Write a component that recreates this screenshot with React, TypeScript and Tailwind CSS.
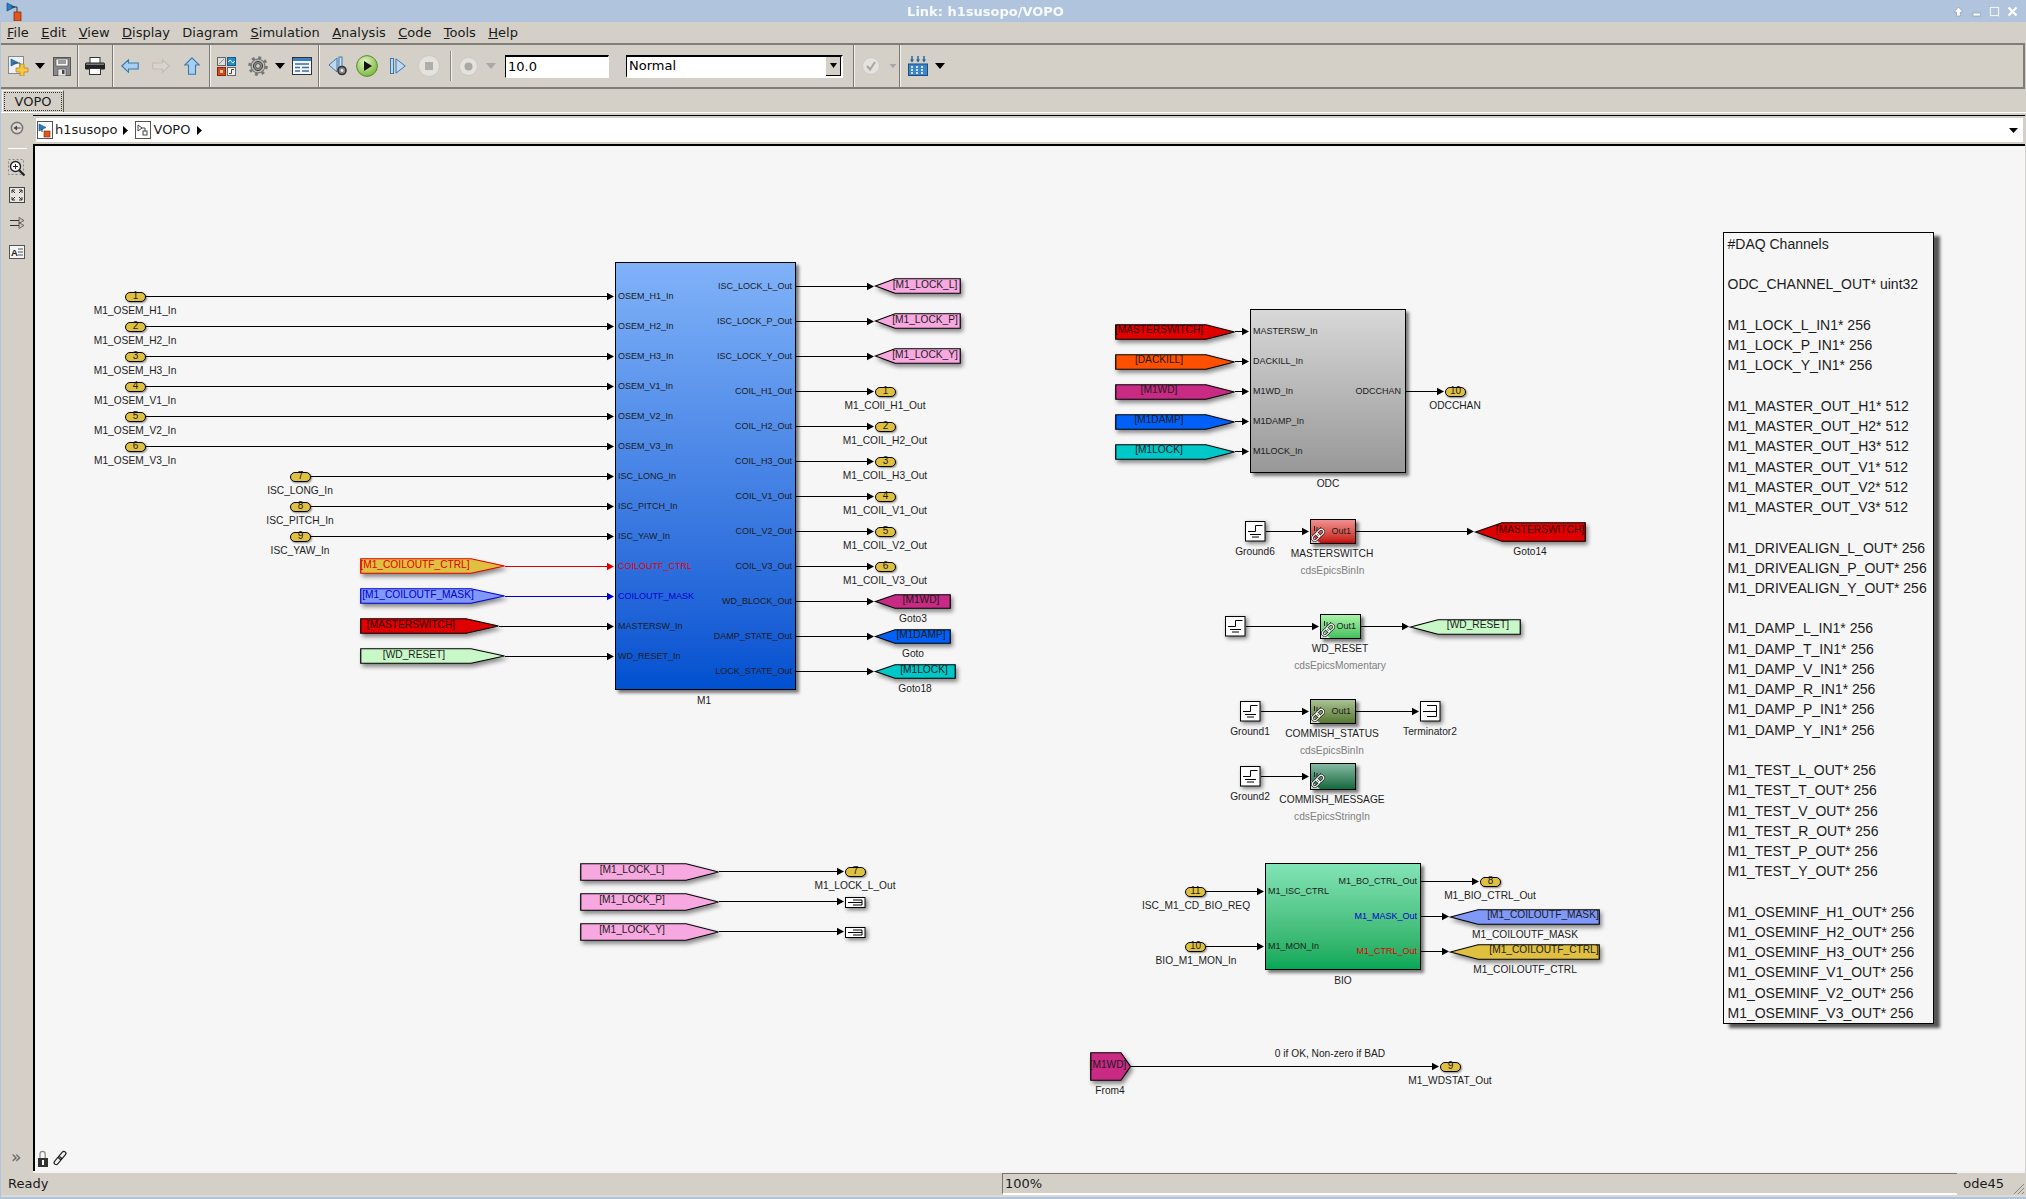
import React from "react";

const OX = 34;
const OY = 146;
const P = (x: number, y: number) => ({ left: x - OX, top: y - OY });

type Anchor = "c" | "l" | "r";
const anchorClass: Record<Anchor, string> = {
  c: "-translate-x-1/2 -translate-y-1/2",
  l: "-translate-y-1/2",
  r: "-translate-x-full -translate-y-1/2",
};

function T({ x, y, t, a = "c", c = "text-[#1c1c1c]", s = "text-[10.2px]" }: { x: number; y: number; t: string; a?: Anchor; c?: string; s?: string }) {
  return (
    <span className={`absolute whitespace-nowrap leading-none ${s} ${anchorClass[a]} ${c}`} style={P(x, y)}>
      {t}
    </span>
  );
}
const PORT = "text-[9px]";

function Pill({ x, y, n, w = 21 }: { x: number; y: number; n: string; w?: number }) {
  return (
    <div
      className="absolute h-[10px] rounded-full border border-black bg-[#e0c040] shadow-[1px_1px_2px_rgba(0,0,0,0.45)] flex items-center justify-center text-[10px] leading-none text-[#1c1c1c]"
      style={{ ...P(x, y - 5), width: w }}
    >
      <span className="-mt-[1px]">{n}</span>
    </div>
  );
}

// Tag: a goto / from pentagon. dir r = point on the right.
function Tag({ x, x2, y, h = 16, notch, dir = "r", fill, stroke = "#000" }: { x: number; x2: number; y: number; h?: number; notch: number; dir?: "r" | "l"; fill: string; stroke?: string }) {
  const w = x2 - x;
  const d =
    dir === "r"
      ? `M.75 .75 H${w - notch} L${w - 0.5} ${h / 2} L${w - notch} ${h - 0.75} H.75 Z`
      : `M.5 ${h / 2} L${notch} .75 H${w - 0.75} V${h - 0.75} H${notch} Z`;
  return (
    <svg className="absolute overflow-visible drop-shadow-[2px_3px_2px_rgba(0,0,0,0.45)]" style={P(x, y - h / 2)} width={w} height={h}>
      <path d={d} fill={fill} stroke={stroke} strokeWidth="1.2" />
    </svg>
  );
}

function Ground({ x, y }: { x: number; y: number }) {
  return (
    <svg className="absolute overflow-visible drop-shadow-[2px_2px_2px_rgba(0,0,0,0.5)]" style={P(x, y)} width="20" height="20">
      <rect x=".5" y=".5" width="19.5" height="19.5" fill="#fff" stroke="#000" />
      <path d="M3 10.5H10.5V4.5H17.5M5 13.5H16M7 16H14" fill="none" stroke="#000" />
    </svg>
  );
}

function Term({ x, y, small }: { x: number; y: number; small?: boolean }) {
  return small ? (
    <svg className="absolute overflow-visible drop-shadow-[2px_2px_2px_rgba(0,0,0,0.5)]" style={P(x, y)} width="20" height="10">
      <rect x=".5" y=".5" width="19.5" height="10" fill="#fff" stroke="#000" />
      <path d="M8 3H17V8H8M3 5.5H17" fill="none" stroke="#000" />
    </svg>
  ) : (
    <svg className="absolute overflow-visible drop-shadow-[2px_2px_2px_rgba(0,0,0,0.5)]" style={P(x, y)} width="20" height="20">
      <rect x=".5" y=".5" width="19.5" height="19.5" fill="#fff" stroke="#000" />
      <path d="M7 4.5H16.5V15.5H7M3 10.5H16.5" fill="none" stroke="#000" />
    </svg>
  );
}

function Chain({ x, y }: { x: number; y: number }) {
  return (
    <svg className="absolute overflow-visible" style={P(x, y)} width="18" height="20">
      <path d="M0 20V12L9 20Z" fill="#fff" opacity=".75" />
      <path d="M3.5 3V8M6 4V8M8 7L10 4" fill="none" stroke="#222" strokeWidth="1" />
      <g fill="none" transform="rotate(45 7 12)">
        <rect x="4.5" y="5" width="5" height="8" rx="2.5" stroke="#222" strokeWidth="2.4" />
        <rect x="4.5" y="11" width="5" height="8" rx="2.5" stroke="#222" strokeWidth="2.4" />
        <rect x="4.5" y="5" width="5" height="8" rx="2.5" stroke="#fff" strokeWidth="1.1" />
        <rect x="4.5" y="11" width="5" height="8" rx="2.5" stroke="#fff" strokeWidth="1.1" />
      </g>
    </svg>
  );
}

function Block({ x, x2, y, y2, cls }: { x: number; x2: number; y: number; y2: number; cls: string }) {
  return (
    <div
      className={`absolute border-[1.5px] border-black shadow-[3px_3px_3px_rgba(0,0,0,0.5)] ${cls}`}
      style={{ ...P(x, y), width: x2 - x, height: y2 - y }}
    />
  );
}

type L = [number, number, number, string?];
const lines: L[] = [
  ...[0, 1, 2, 3, 4, 5].map((i): L => [146, 608, 296.5 + 30 * i]),
  ...[6, 7, 8].map((i): L => [311, 608, 296.5 + 30 * i]),
  [505, 608, 566.5, "#e00000"],
  [505, 608, 596.5, "#0000d0"],
  [499, 608, 626.5],
  [505, 608, 656.5],
  ...Array.from({ length: 12 }, (_, i): L => [796, 868, 286.5 + 35 * i]),
  ...[0, 1, 2, 3, 4].map((i): L => [1235, 1243, 331.5 + 30 * i]),
  [1406, 1438, 391.5],
  [1266, 1303, 531.5],
  [1356, 1468, 531.5],
  [1246, 1313, 626.5],
  [1361, 1403, 626.5],
  [1261, 1303, 711.5],
  [1356, 1413, 711.5],
  [1261, 1303, 776.5],
  [1206, 1258, 891.5],
  [1206, 1258, 946.5],
  [1421, 1473, 881.5],
  [1421, 1443, 916.5],
  [1421, 1443, 951.5],
  [1131, 1433, 1066.5],
  [719, 838, 871.5],
  [719, 838, 901.5],
  [719, 838, 931.5],
];

const noteLines = [
  "#DAQ Channels",
  "",
  "ODC_CHANNEL_OUT* uint32",
  "",
  "M1_LOCK_L_IN1* 256",
  "M1_LOCK_P_IN1* 256",
  "M1_LOCK_Y_IN1* 256",
  "",
  "M1_MASTER_OUT_H1* 512",
  "M1_MASTER_OUT_H2* 512",
  "M1_MASTER_OUT_H3* 512",
  "M1_MASTER_OUT_V1* 512",
  "M1_MASTER_OUT_V2* 512",
  "M1_MASTER_OUT_V3* 512",
  "",
  "M1_DRIVEALIGN_L_OUT* 256",
  "M1_DRIVEALIGN_P_OUT* 256",
  "M1_DRIVEALIGN_Y_OUT* 256",
  "",
  "M1_DAMP_L_IN1* 256",
  "M1_DAMP_T_IN1* 256",
  "M1_DAMP_V_IN1* 256",
  "M1_DAMP_R_IN1* 256",
  "M1_DAMP_P_IN1* 256",
  "M1_DAMP_Y_IN1* 256",
  "",
  "M1_TEST_L_OUT* 256",
  "M1_TEST_T_OUT* 256",
  "M1_TEST_V_OUT* 256",
  "M1_TEST_R_OUT* 256",
  "M1_TEST_P_OUT* 256",
  "M1_TEST_Y_OUT* 256",
  "",
  "M1_OSEMINF_H1_OUT* 256",
  "M1_OSEMINF_H2_OUT* 256",
  "M1_OSEMINF_H3_OUT* 256",
  "M1_OSEMINF_V1_OUT* 256",
  "M1_OSEMINF_V2_OUT* 256",
  "M1_OSEMINF_V3_OUT* 256",
];

const leftIn = ["OSEM_H1_In", "OSEM_H2_In", "OSEM_H3_In", "OSEM_V1_In", "OSEM_V2_In", "OSEM_V3_In", "ISC_LONG_In", "ISC_PITCH_In", "ISC_YAW_In", "COILOUTF_CTRL", "COILOUTF_MASK", "MASTERSW_In", "WD_RESET_In"];
const m1Out = ["ISC_LOCK_L_Out", "ISC_LOCK_P_Out", "ISC_LOCK_Y_Out", "COIL_H1_Out", "COIL_H2_Out", "COIL_H3_Out", "COIL_V1_Out", "COIL_V2_Out", "COIL_V3_Out", "WD_BLOCK_Out", "DAMP_STATE_Out", "LOCK_STATE_Out"];
const inNames = ["M1_OSEM_H1_In", "M1_OSEM_H2_In", "M1_OSEM_H3_In", "M1_OSEM_V1_In", "M1_OSEM_V2_In", "M1_OSEM_V3_In"];

function Diagram() {
  return (
    <div className="relative flex-1 bg-[#f6f6f6] border-t-2 border-l-2 border-black overflow-hidden font-['Liberation_Sans',sans-serif]">
      <div className="absolute inset-0 -ml-[1px]">
        {/* tags on left of M1 */}
        <Tag x={360} x2={505} y={566.3} notch={34} fill="#e0c040" stroke="#e00000" />
        <Tag x={360} x2={505} y={596.3} notch={34} fill="#8098f8" stroke="#0000d0" />
        <Tag x={360} x2={499} y={626.3} notch={33} fill="#e00000" />
        <Tag x={360} x2={505} y={656.3} notch={34} fill="#c8f8c8" />
        <Block x={615} x2={796} y={262} y2={690} cls="bg-gradient-to-b from-[#80b2f8] to-[#0050d0]" />
        <Block x={1250} x2={1406} y={309} y2={473} cls="bg-gradient-to-b from-[#d8d8d8] to-[#989898]" />
        <Block x={1265} x2={1421} y={863} y2={970} cls="bg-gradient-to-b from-[#82e4b6] to-[#00a858]" />
        <Block x={1310} x2={1356} y={519} y2={544} cls="bg-gradient-to-b from-[#f09090] to-[#c00000]" />
        <Block x={1320} x2={1361} y={614} y2={639} cls="bg-gradient-to-b from-[#a8f4a8] to-[#40c060]" />
        <Block x={1310} x2={1356} y={699} y2={724} cls="bg-gradient-to-b from-[#aac294] to-[#587830]" />
        <Block x={1310} x2={1356} y={763} y2={790} cls="bg-gradient-to-b from-[#84baa4] to-[#0a6a40]" />

        {/* signals */}
        <svg className="absolute inset-0 w-full h-full">
          {lines.map(([a, b, y, c], i) => {
            const col = c ?? "#000";
            return (
              <g key={i} transform={`translate(${-OX} ${-OY})`}>
                <path d={`M${a} ${y}H${b}`} stroke={col} strokeWidth="1" fill="none" />
                <path d={`M${b - 1} ${y - 3.7}L${b + 6} ${y}L${b - 1} ${y + 3.7}Z`} fill={col} />
              </g>
            );
          })}
        </svg>

        {/* inports */}
        {inNames.map((t, i) => (
          <React.Fragment key={t}>
            <Pill x={125} y={296.5 + 30 * i} n={String(i + 1)} />
            <T x={135} y={310.5 + 30 * i} t={t} />
          </React.Fragment>
        ))}
        {["ISC_LONG_In", "ISC_PITCH_In", "ISC_YAW_In"].map((t, i) => (
          <React.Fragment key={t}>
            <Pill x={290} y={476.5 + 30 * i} n={String(i + 7)} />
            <T x={300} y={490.5 + 30 * i} t={t} />
          </React.Fragment>
        ))}
        <T x={415} y={565} t="[M1_COILOUTF_CTRL]" c="text-[#e00000]" />
        <T x={418} y={595} t="[M1_COILOUTF_MASK]" c="text-[#0000d0]" />
        <T x={411} y={625} t="[MASTERSWITCH]" c="text-[#300000]" />
        <T x={414} y={655} t="[WD_RESET]" />

        {/* M1 ports */}
        {leftIn.map((t, i) => (
          <T key={t} x={618} y={296 + 30 * i} t={t} a="l" s={PORT} c={i === 9 ? "text-[#e00000]" : i === 10 ? "text-[#0000d0]" : "text-[#1c1c1c]"} />
        ))}
        {m1Out.map((t, i) => (
          <T key={t} x={792} y={286 + 35 * i} t={t} a="r" s={PORT} />
        ))}
        <T x={704} y={701} t="M1" />

        {/* M1 outputs */}
        {["[M1_LOCK_L]", "[M1_LOCK_P]", "[M1_LOCK_Y]"].map((t, i) => (
          <React.Fragment key={t}>
            <Tag x={875} x2={961} y={286.3 + 35 * i} notch={20} dir="l" fill="#f8a8e0" />
            <T x={925} y={285 + 35 * i} t={t} />
          </React.Fragment>
        ))}
        {["M1_COIl_H1_Out", "M1_COIL_H2_Out", "M1_COIL_H3_Out", "M1_COIL_V1_Out", "M1_COIL_V2_Out", "M1_COIL_V3_Out"].map((t, i) => (
          <React.Fragment key={t}>
            <Pill x={875} y={391.5 + 35 * i} n={String(i + 1)} />
            <T x={885} y={405.5 + 35 * i} t={t} />
          </React.Fragment>
        ))}
        <Tag x={875} x2={951} y={601.5} h={15} notch={20} dir="l" fill="#c82a84" />
        <T x={921} y={600} t="[M1WD]" />
        <T x={913} y={618.5} t="Goto3" />
        <Tag x={875} x2={951} y={636.5} h={15} notch={20} dir="l" fill="#0060f8" />
        <T x={921} y={635} t="[M1DAMP]" />
        <T x={913} y={653.5} t="Goto" />
        <Tag x={875} x2={956} y={671.5} h={15} notch={20} dir="l" fill="#00c8c8" />
        <T x={924} y={670} t="[M1LOCK]" />
        <T x={915} y={688.5} t="Goto18" />

        {/* ODC */}
        {[
          ["[MASTERSWITCH]", "#e00000"],
          ["[DACKILL]", "#ff5000"],
          ["[M1WD]", "#c82a84"],
          ["[M1DAMP]", "#0060f8"],
          ["[M1LOCK]", "#00c8c8"],
        ].map(([t, f], i) => (
          <React.Fragment key={t}>
            <Tag x={1115} x2={1235} y={331.5 + 30 * i} notch={29} fill={f} />
            <T x={1159} y={330 + 30 * i} t={t} c={i === 0 ? "text-[#300000]" : "text-[#1c1c1c]"} />
          </React.Fragment>
        ))}
        {["MASTERSW_In", "DACKILL_In", "M1WD_In", "M1DAMP_In", "M1LOCK_In"].map((t, i) => (
          <T key={t} x={1253} y={331 + 30 * i} t={t} a="l" s={PORT} />
        ))}
        <T x={1401} y={391} t="ODCCHAN" a="r" s={PORT} />
        <T x={1328} y={483.5} t="ODC" />
        <Pill x={1445} y={391.5} n="10" />
        <T x={1455} y={405.5} t="ODCCHAN" />

        {/* MASTERSWITCH */}
        <Ground x={1245} y={521} />
        <T x={1255} y={552} t="Ground6" />
        <Chain x={1311} y={523} />
        <T x={1351} y={531} t="Out1" a="r" s={PORT} />
        <T x={1332} y={553.5} t="MASTERSWITCH" />
        <T x={1332.5} y={571} t="cdsEpicsBinIn" c="text-[#808080]" />
        <Tag x={1475} x2={1586} y={531.5} h={20} notch={27} dir="l" fill="#e00000" />
        <T x={1540} y={530} t="[MASTERSWITCH]" c="text-[#300000]" />
        <T x={1530} y={552} t="Goto14" />

        {/* WD_RESET */}
        <Ground x={1225} y={616} />
        <Chain x={1321} y={618} />
        <T x={1356} y={626} t="Out1" a="r" s={PORT} />
        <T x={1340} y={648.5} t="WD_RESET" />
        <T x={1340} y={666} t="cdsEpicsMomentary" c="text-[#808080]" />
        <Tag x={1410} x2={1521} y={626.5} notch={28} dir="l" fill="#c8f8c8" />
        <T x={1478} y={625} t="[WD_RESET]" />

        {/* COMMISH */}
        <Ground x={1240} y={701} />
        <T x={1250} y={732} t="Ground1" />
        <Chain x={1311} y={703} />
        <T x={1351} y={711} t="Out1" a="r" s={PORT} />
        <T x={1332} y={734} t="COMMISH_STATUS" />
        <T x={1332} y={751} t="cdsEpicsBinIn" c="text-[#808080]" />
        <Term x={1420} y={701} />
        <T x={1430} y={732} t="Terminator2" />
        <Ground x={1240} y={766} />
        <T x={1250} y={797} t="Ground2" />
        <Chain x={1311} y={769} />
        <T x={1332} y={799.5} t="COMMISH_MESSAGE" />
        <T x={1332} y={817} t="cdsEpicsStringIn" c="text-[#808080]" />

        {/* lower-left tags */}
        {["[M1_LOCK_L]", "[M1_LOCK_P]", "[M1_LOCK_Y]"].map((t, i) => (
          <React.Fragment key={t}>
            <Tag x={580} x2={719} y={871.5 + 30 * i} h={18} notch={33} fill="#f8a8e0" />
            <T x={632} y={870 + 30 * i} t={t} />
          </React.Fragment>
        ))}
        <Pill x={845} y={871.5} n="7" />
        <T x={855} y={886} t="M1_LOCK_L_Out" />
        <Term x={845} y={896.5} small />
        <Term x={845} y={926.5} small />

        {/* BIO */}
        <Pill x={1185} y={891.5} n="11" />
        <T x={1196} y={906} t="ISC_M1_CD_BIO_REQ" />
        <Pill x={1185} y={946.5} n="10" />
        <T x={1196} y={961} t="BIO_M1_MON_In" />
        <T x={1268} y={891} t="M1_ISC_CTRL" a="l" s={PORT} />
        <T x={1268} y={946} t="M1_MON_In" a="l" s={PORT} />
        <T x={1417} y={881} t="M1_BO_CTRL_Out" a="r" s={PORT} />
        <T x={1417} y={916} t="M1_MASK_Out" a="r" s={PORT} c="text-[#0000d0]" />
        <T x={1417} y={951} t="M1_CTRL_Out" a="r" s={PORT} c="text-[#e00000]" />
        <T x={1343} y={980.5} t="BIO" />
        <Pill x={1480} y={881.5} n="8" />
        <T x={1490} y={896} t="M1_BIO_CTRL_Out" />
        <Tag x={1450} x2={1600} y={916.5} notch={28} dir="l" fill="#8098f8" />
        <T x={1543} y={915} t="[M1_COILOUTF_MASK]" />
        <T x={1525} y={934.5} t="M1_COILOUTF_MASK" />
        <Tag x={1450} x2={1600} y={951.5} notch={28} dir="l" fill="#e0c040" />
        <T x={1544} y={950} t="[M1_COILOUTF_CTRL]" />
        <T x={1525} y={969.5} t="M1_COILOUTF_CTRL" />

        {/* From4 */}
        <Tag x={1090} x2={1131} y={1066.5} h={29} notch={10} fill="#c82a84" />
        <T x={1108} y={1065} t="[M1WD]" />
        <T x={1110} y={1091} t="From4" />
        <T x={1330} y={1054} t="0 if OK, Non-zero if BAD" />
        <Pill x={1440} y={1066.5} n="9" />
        <T x={1450} y={1081} t="M1_WDSTAT_Out" />

        {/* Note */}
        <div
          className="absolute w-[211px] h-[792px] bg-[#f6f6f6] border border-black shadow-[6px_4px_3px_rgba(0,0,0,0.65)] pl-[3.5px] pt-[1px] text-[14px] leading-[20.24px] text-[#1c1c1c] whitespace-pre"
          style={P(1723, 232)}
        >
          {noteLines.map((t, i) => (
            <div key={i} className="h-[20.24px]">
              {t || " "}
            </div>
          ))}
        </div>

        {/* lock / link */}
        <svg className="absolute" style={P(37, 1150)} width="32" height="17" viewBox="0 0 32 17">
          <path d="M3 8V4a2.6 2.6 0 015.2 0V8" fill="none" stroke="#888" strokeWidth="1.2" />
          <rect x="1" y="8" width="10" height="9" fill="#333" />
          <rect x="5" y="10" width="2" height="5" fill="#fff" />
          <g transform="rotate(40 23 8)" fill="none" stroke="#222" strokeWidth="1.2">
            <rect x="21" y="0" width="4" height="9" rx="2" />
            <rect x="21" y="7" width="4" height="9" rx="2" />
          </g>
        </svg>
      </div>
    </div>
  );
}

function Caret({ gray }: { gray?: boolean }) {
  return (
    <svg width="10" height="6" viewBox="0 0 10 6" className="shrink-0">
      <path d="M0 0H10L5 6Z" fill={gray ? "#a8a8a8" : "#000"} />
    </svg>
  );
}

function ModelIcon({ size = 16 }: { size?: number }) {
  return (
    <svg width={size} height={size + 2} viewBox="0 0 16 18" className="shrink-0">
      <rect x=".5" y=".5" width="15" height="17" fill="#fff" stroke="#555" />
      <path d="M2 3L9 6.5L2 10Z" fill="#2480c8" stroke="#134e80" strokeWidth=".6" />
      <path d="M5 8V11" stroke="#333" />
      <rect x="7" y="10" width="6" height="6" fill="#e0561c" stroke="#802000" strokeWidth=".6" />
    </svg>
  );
}

function SubIcon() {
  return (
    <svg width="16" height="18" viewBox="0 0 16 18" className="shrink-0">
      <rect x=".5" y=".5" width="15" height="17" fill="#fff" stroke="#555" />
      <path d="M3 4L7 7L3 10Z" fill="none" stroke="#444" />
      <rect x="8" y="10" width="4" height="4" fill="none" stroke="#444" />
      <path d="M7 7H10V10" stroke="#444" fill="none" />
    </svg>
  );
}

function Sep() {
  return <div className="w-[2px] self-stretch bg-[#7a7872] border-r border-[#f4f2ee] shrink-0" />;
}

function Toolbar() {
  return (
    <div className="h-[46px] flex items-center border-t-2 border-b-2 border-[#7f7d78] border-r-2 mr-[1px] shrink-0">
      <div className="w-[76px] flex items-center pl-[7px] shrink-0">
        <svg width="21" height="20" viewBox="0 0 21 20" className="shrink-0">
          <rect x=".5" y=".5" width="15" height="17" fill="#eef2f6" stroke="#888" />
          <path d="M3 3L10 6.5L3 10Z" fill="#2c80c8" stroke="#134e80" strokeWidth=".6" />
          <path d="M5 7H12V11" stroke="#444" fill="none" />
          <path d="M12 8H16V12H20V16H16V20H12V16H8V12H12Z" fill="#f8c848" stroke="#b08820" strokeWidth=".8" />
        </svg>
        <div className="ml-[6px]">
          <Caret />
        </div>
        <svg width="18" height="19" viewBox="0 0 18 19" className="ml-[8px] shrink-0">
          <rect x=".5" y=".5" width="17" height="18" fill="#8a8a8a" stroke="#555" />
          <rect x="3" y="2" width="12" height="7" fill="#f4f4f4" stroke="#444" strokeWidth=".6" />
          <path d="M5 4H13M5 6H13" stroke="#444" />
          <rect x="5" y="12" width="8" height="7" fill="#e8e8e8" stroke="#444" strokeWidth=".6" />
          <rect x="9" y="13" width="2.5" height="4" fill="#444" />
        </svg>
      </div>
      <Sep />
      <div className="w-[33px] flex items-center pl-[6px] shrink-0">
        <svg width="20" height="18" viewBox="0 0 20 18" className="shrink-0">
          <rect x="5" y=".5" width="10" height="6" fill="#fff" stroke="#333" />
          <path d="M1 6H19a.7.7 0 01.5.7V12H.5V6.7A.7.7 0 011 6Z" fill="#7a7a7a" stroke="#222" />
          <rect x=".5" y="8" width="19" height="4" fill="#222" />
          <rect x="4.5" y="11.5" width="11" height="6" fill="#fff" stroke="#333" />
        </svg>
      </div>
      <Sep />
      <div className="w-[95px] flex items-center pl-[7px] shrink-0">
        <svg width="18" height="14" viewBox="0 0 18 14" className="shrink-0">
          <path d="M.8 7L7.5 .8V4H17.2V10H7.5V13.2Z" fill="#a8cff0" stroke="#3a78b0" strokeWidth="1.1" />
        </svg>
        <svg width="18" height="14" viewBox="0 0 18 14" className="ml-[13px] shrink-0">
          <path d="M17.2 7L10.5 .8V4H.8V10H10.5V13.2Z" fill="#d8d5cf" stroke="#bfbcb5" strokeWidth="1.1" />
        </svg>
        <svg width="16" height="18" viewBox="0 0 16 18" className="ml-[14px] shrink-0">
          <path d="M8 .8L15.2 8H11.5V17.2H4.5V8H.8Z" fill="#a8cff0" stroke="#3a78b0" strokeWidth="1.1" />
        </svg>
      </div>
      <Sep />
      <div className="w-[107px] flex items-center pl-[6px] shrink-0">
        <svg width="19" height="19" viewBox="0 0 19 19" className="shrink-0">
          <rect x=".5" y=".5" width="8" height="8" fill="#dedede" stroke="#666" />
          <path d="M2 7L7 2" stroke="#888" />
          <rect x="10.5" y=".5" width="8" height="8" fill="#2a8bc8" stroke="#155a88" />
          <path d="M11.5 5Q13 1.5 14.5 4.5T17.5 4" stroke="#fff" fill="none" />
          <rect x=".5" y="10.5" width="8" height="8" fill="#d0481c" stroke="#802808" />
          <rect x="3" y="13" width="3" height="3" fill="#f4c0a0" />
          <rect x="10.5" y="10.5" width="8" height="8" fill="#f0f0f0" stroke="#666" />
          <path d="M12 16.5H14.5V12.5H17" stroke="#444" fill="none" />
        </svg>
        <svg width="20" height="20" viewBox="0 0 20 20" className="ml-[12px] shrink-0">
          <circle cx="10" cy="10" r="8.5" fill="none" stroke="#777" strokeWidth="2.6" strokeDasharray="3 3.67" />
          <circle cx="10" cy="10" r="7" fill="#bdbbb6" stroke="#666" />
          <circle cx="10" cy="10" r="4.6" fill="#888" stroke="#444" />
          <circle cx="10" cy="10" r="2.4" fill="#d4d0c8" stroke="#555" />
        </svg>
        <div className="ml-[7px]">
          <Caret />
        </div>
        <svg width="20" height="18" viewBox="0 0 20 18" className="ml-[7px] shrink-0">
          <rect x=".5" y=".5" width="19" height="17" fill="#f4f6fa" stroke="#333" />
          <rect x="1" y="1" width="18" height="3" fill="#3a80c0" />
          <path d="M3 7H17M3 10.5H8M10 10.5H17M3 14H8M10 14H17" stroke="#3a6ea5" strokeWidth="1.4" />
        </svg>
      </div>
      <Sep />
      <div className="w-[130px] flex items-center pl-[8px] shrink-0">
        <svg width="20" height="20" viewBox="0 0 20 20" className="shrink-0">
          <path d="M9 2V16L1 9Z" fill="#c0d8f0" stroke="#3a78b0" />
          <rect x="11" y="1" width="3" height="11" fill="#d0e0f0" stroke="#3a78b0" />
          <circle cx="14" cy="14.5" r="4" fill="#888" stroke="#333" strokeWidth="1.6" />
          <circle cx="14" cy="14.5" r="1.4" fill="#eee" />
        </svg>
        <svg width="22" height="22" viewBox="0 0 22 22" className="ml-[8px] shrink-0">
          <defs>
            <radialGradient id="pg" cx=".4" cy=".3" r=".8">
              <stop offset="0" stopColor="#e0f4c0" />
              <stop offset="1" stopColor="#70b030" />
            </radialGradient>
          </defs>
          <circle cx="11" cy="11" r="10.4" fill="url(#pg)" stroke="#5a8a30" />
          <path d="M8 6L16 11L8 16Z" fill="#111" />
        </svg>
        <svg width="16" height="16" viewBox="0 0 16 16" className="ml-[12px] shrink-0">
          <rect x=".5" y=".5" width="3" height="15" fill="#c0d8f0" stroke="#3a78b0" />
          <path d="M6 .8V15.2L15.2 8Z" fill="#c0d8f0" stroke="#3a78b0" />
        </svg>
        <svg width="22" height="22" viewBox="0 0 22 22" className="ml-[12px] shrink-0">
          <circle cx="11" cy="11" r="10.5" fill="#e4e2dc" stroke="#ccc9c2" />
          <rect x="7" y="7" width="8" height="8" fill="#b0aea8" />
        </svg>
      </div>
      <div className="w-[2px] h-[30px] bg-[#8a8882] border-r border-[#f4f2ee] shrink-0" />
      <div className="flex items-center pl-[7px] shrink-0">
        <svg width="19" height="19" viewBox="0 0 19 19" className="shrink-0">
          <circle cx="9.5" cy="9.5" r="9" fill="#e4e2dc" stroke="#ccc9c2" />
          <circle cx="9.5" cy="9.5" r="4" fill="#aaa8a2" />
        </svg>
        <div className="ml-[8px]">
          <Caret gray />
        </div>
      </div>
      <div className="ml-[9px] w-[104px] h-[23px] bg-white border-t-2 border-l border-black border-r border-b border-r-white border-b-white flex items-center pl-[2px] text-[13px] text-black shrink-0">
        10.0
      </div>
      <div className="ml-[17px] w-[217px] h-[23px] bg-white border-t-2 border-l border-black border-r-2 border-b-2 border-r-white border-b-white flex items-center pl-[2px] text-[13px] text-black relative shrink-0">
        Normal
        <div className="absolute right-0 top-0 bottom-0 w-[15px] bg-[#d4d0c8] border-r border-b border-black flex items-center justify-center">
          <svg width="7" height="5" viewBox="0 0 7 5">
            <path d="M0 0H7L3.5 5Z" fill="#000" />
          </svg>
        </div>
      </div>
      <div className="ml-[10px] self-stretch w-[2px] bg-[#7a7872] border-r border-[#f4f2ee] shrink-0" />
      <div className="w-[44px] flex items-center pl-[7px] shrink-0">
        <svg width="18" height="18" viewBox="0 0 18 18" className="shrink-0">
          <circle cx="9" cy="9" r="8.5" fill="#e4e2dc" stroke="#ccc9c2" />
          <path d="M5 9L8 12.5L13 5" fill="none" stroke="#a8a6a0" strokeWidth="2" />
        </svg>
        <div className="ml-[8px] scale-75">
          <Caret gray />
        </div>
      </div>
      <Sep />
      <div className="flex items-center pl-[7px] shrink-0">
        <svg width="20" height="20" viewBox="0 0 20 20" className="shrink-0">
          <path d="M4 0V4M10 0V4M16 0V4" stroke="#2060a0" strokeWidth="1.4" />
          <path d="M2 3.5H6L4 6.5ZM8 3.5H12L10 6.5ZM14 3.5H18L16 6.5Z" fill="#2060a0" />
          <rect x=".5" y="8" width="19" height="11.5" fill="#3a86c8" stroke="#1c4c80" />
          <path d="M3 11H5M8 11H10M13 11H15M3 14H5M8 14H10M13 14H15M3 17H5M8 17H10M13 17H15" stroke="#fff" strokeWidth="1.6" />
        </svg>
        <div className="ml-[7px]">
          <Caret />
        </div>
      </div>
    </div>
  );
}

function Rail() {
  return (
    <div className="w-[32px] shrink-0 flex flex-col items-center relative">
      <svg width="14" height="14" viewBox="0 0 14 14" className="mt-[8px]">
        <circle cx="7" cy="7" r="5.6" fill="#dedbd4" stroke="#777" strokeWidth="1.6" />
        <path d="M3.5 7L7 4.5V9.5Z" fill="#444" />
        <path d="M6 7H10.5" stroke="#444" />
      </svg>
      <div className="mt-[13px] w-[19px] h-[1px] bg-white" />
      <svg width="18" height="18" viewBox="0 0 18 18" className="mt-[10px]">
        <rect x=".5" y=".5" width="15" height="15" fill="none" stroke="#888" strokeDasharray="2 2" />
        <circle cx="7.5" cy="7.5" r="5" fill="#fff" stroke="#222" strokeWidth="1.4" />
        <path d="M5 7.5H10M7.5 5V10" stroke="#222" />
        <path d="M11 11L16.5 16.5" stroke="#222" strokeWidth="2.2" />
      </svg>
      <svg width="16" height="16" viewBox="0 0 16 16" className="mt-[10px]">
        <rect x=".5" y=".5" width="15" height="15" fill="#e8e6e0" stroke="#444" />
        <path d="M3 6V3H6M13 6V3H10M3 10V13H6M13 10V13H10M3 3L6 6M13 3L10 6M3 13L6 10M13 13L10 10" fill="none" stroke="#333" />
      </svg>
      <svg width="16" height="12" viewBox="0 0 16 12" className="mt-[14px]">
        <path d="M1 3.5H13M1 8.5H13" stroke="#333" />
        <path d="M10 .5L15 3.5L10 6.5ZM10 5.5L15 8.5L10 11.5Z" fill="#c8c4bc" stroke="#444" strokeWidth=".7" />
      </svg>
      <svg width="16" height="14" viewBox="0 0 16 14" className="mt-[16px]">
        <rect x=".5" y=".5" width="15" height="13" fill="#f4f4f4" stroke="#555" />
        <text x="2" y="10.5" fontSize="9.5" fontWeight="700" fontFamily="Liberation Sans" fill="#222">
          A
        </text>
        <path d="M9 4H14M9 7H14M9 10H14" stroke="#555" />
      </svg>
      <span className="absolute left-[10px] top-[1036px] text-[17px] leading-none text-[#666]">»</span>
    </div>
  );
}

export default function App() {
  const menus = [
    ["F", "ile"],
    ["E", "dit"],
    ["V", "iew"],
    ["D", "isplay"],
    ["", "Diagram"],
    ["S", "imulation"],
    ["A", "nalysis"],
    ["C", "ode"],
    ["T", "ools"],
    ["H", "elp"],
  ];
  return (
    <div className="w-[2026px] h-[1199px] overflow-hidden flex flex-col bg-[#d4d0c8] font-['DejaVu_Sans',sans-serif] text-[13px] text-[#1a1a1a] border-l border-[#b0c4de]">
      {/* Title */}
      <div className="h-[22px] bg-[#b0c4de] relative flex items-center justify-center shrink-0">
        <svg width="18" height="19" viewBox="0 0 18 19" className="absolute left-[5px] top-[2px]">
          <path d="M1 1L9 5L1 9Z" fill="#2480c8" stroke="#134e80" strokeWidth=".7" />
          <path d="M5 5H11V10" fill="none" stroke="#333" />
          <rect x="8" y="10" width="7" height="9" fill="#e0561c" stroke="#802000" strokeWidth=".7" />
        </svg>
        <span className="text-white text-[13px] font-bold opacity-90 ml-[-56px] mt-[2px]">Link: h1susopo/VOPO</span>
        <div className="absolute right-[8px] top-0 h-full flex items-center gap-[7px]">
          <svg width="11" height="11" viewBox="0 0 11 11">
            <path d="M5.5 1L10 6H7.5V10H3.5V6H1Z" fill="#fff" stroke="#8a9cb8" strokeWidth=".7" />
          </svg>
          <svg width="11" height="11" viewBox="0 0 11 11">
            <rect x="2" y="7" width="7.5" height="3" fill="#fff" stroke="#8a9cb8" strokeWidth=".7" />
          </svg>
          <svg width="11" height="11" viewBox="0 0 11 11">
            <rect x="1" y="1" width="9" height="9" fill="none" stroke="#fff" strokeWidth="1.6" />
            <rect x=".3" y=".3" width="10.4" height="10.4" fill="none" stroke="#8a9cb8" strokeWidth=".5" />
          </svg>
          <svg width="11" height="11" viewBox="0 0 11 11">
            <path d="M1.5 1.5L9.5 9.5M9.5 1.5L1.5 9.5" stroke="#fff" strokeWidth="2.2" />
          </svg>
        </div>
      </div>
      {/* Menu */}
      <div className="h-[21px] flex items-center gap-[12.4px] pl-[6px] shrink-0">
        {menus.map(([a, b]) => (
          <span key={b}>
            {a && <u>{a}</u>}
            {b}
          </span>
        ))}
      </div>
      <Toolbar />
      {/* Tabs */}
      <div className="h-[24px] flex items-end shrink-0 border-b border-white">
        <div className="ml-[1px] w-[62px] h-[22px] border-r border-[#5c5a55] border-l border-t border-l-[#f4f2ee] border-t-[#f4f2ee] flex items-center justify-center relative">
          <div className="absolute inset-[1px] border border-dotted border-[#333]" />
          VOPO
        </div>
      </div>
      {/* Main */}
      <div className="flex-1 flex min-h-0">
        <Rail />
        <div className="flex-1 flex flex-col min-w-0 mr-[1px]">
          <div className="h-[31px] shrink-0 flex flex-col">
            <div className="h-[1px] mt-[2px] bg-black" />
            <div className="h-[2px]" />
            <div className="h-[24px] bg-white ml-[3px] mr-[2px] flex items-center pl-[1px] relative">
              <ModelIcon />
              <span className="ml-[2px] -mt-[1px]">h1susopo</span>
              <svg width="5" height="9" viewBox="0 0 5 9" className="ml-[6px]">
                <path d="M0 0L5 4.5L0 9Z" fill="#000" />
              </svg>
              <div className="w-[7px]" />
              <SubIcon />
              <span className="ml-[2px] -mt-[1px]">VOPO</span>
              <svg width="5" height="9" viewBox="0 0 5 9" className="ml-[7px]">
                <path d="M0 0L5 4.5L0 9Z" fill="#000" />
              </svg>
              <svg width="9" height="5" viewBox="0 0 9 5" className="absolute right-[5px] top-[10px]">
                <path d="M0 0H9L4.5 5Z" fill="#000" />
              </svg>
            </div>
          </div>
          <Diagram />
          <div className="h-[2px] bg-[#f4f2ee] shrink-0" />
        </div>
      </div>
      {/* Status */}
      <div className="h-[22px] shrink-0 flex items-center">
        <div className="w-[1001px] pl-[7px]">Ready</div>
        <div className="w-[955px] h-full border-l border-t border-[#77756f] border-b-2 border-b-white pl-[2px] flex items-center">100%</div>
        <div className="flex-1 h-full flex items-center justify-end pr-[22px] relative">
          ode45
          <svg width="12" height="12" viewBox="0 0 12 12" className="absolute right-[1px] bottom-0">
            <path d="M11 1L1 11M11 5L5 11M11 9L9 11" stroke="#8a8882" />
          </svg>
        </div>
      </div>
      <div className="h-[4px] shrink-0 bg-[#dcd9d2] border-b-2 border-[#b0c4de]" />
    </div>
  );
}
